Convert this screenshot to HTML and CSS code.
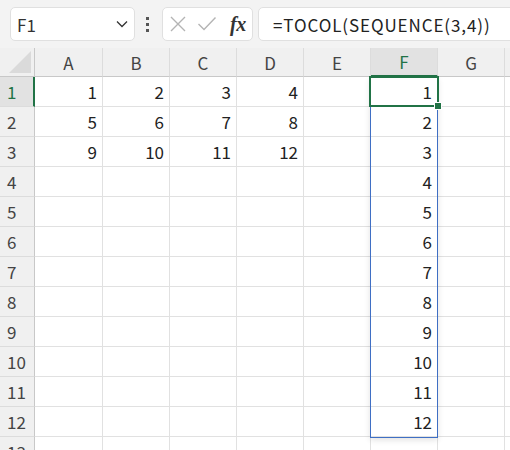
FILE: index.html
```html
<!DOCTYPE html>
<html>
<head>
<meta charset="utf-8">
<link rel="stylesheet" href="styles.css">
</head>
<body>
<div class="topbar">
  <div class="namebox"><span class="nm">F1</span>
    <svg class="chev" width="12" height="8" viewBox="0 0 12 8"><path d="M1 1.5 L6 6.5 L11 1.5" fill="none" stroke="#333" stroke-width="1.3"/></svg>
  </div>
  <div class="dots"><i></i><i></i><i></i></div>
  <div class="fxbox">
    <svg width="18" height="18" viewBox="0 0 18 18"><path d="M2 2 L16 16 M16 2 L2 16" stroke="#b4b4b4" stroke-width="1.4"/></svg>
    <svg width="20" height="18" viewBox="0 0 20 18"><path d="M1.5 9 L7 14.5 L18.5 2.5" fill="none" stroke="#b4b4b4" stroke-width="1.4"/></svg>
    <span class="fx">fx</span>
  </div>
  <div class="formula">=TOCOL(SEQUENCE(3,4))</div>
</div>
<div class="sheet">
  <div class="row hdr">
    <div class="rh corner"><span class="tri"></span></div>
    <div class="c ch">A</div><div class="c ch">B</div><div class="c ch">C</div><div class="c ch">D</div><div class="c ch">E</div><div class="c ch sel">F</div><div class="c ch">G</div><div class="c ch last"></div>
  </div>
  <div class="row"><div class="rh selr">1</div><div class="c">1</div><div class="c">2</div><div class="c">3</div><div class="c">4</div><div class="c"></div><div class="c">1</div><div class="c"></div><div class="c last"></div></div>
  <div class="row"><div class="rh">2</div><div class="c">5</div><div class="c">6</div><div class="c">7</div><div class="c">8</div><div class="c"></div><div class="c">2</div><div class="c"></div><div class="c last"></div></div>
  <div class="row"><div class="rh">3</div><div class="c">9</div><div class="c">10</div><div class="c">11</div><div class="c">12</div><div class="c"></div><div class="c">3</div><div class="c"></div><div class="c last"></div></div>
  <div class="row"><div class="rh">4</div><div class="c"></div><div class="c"></div><div class="c"></div><div class="c"></div><div class="c"></div><div class="c">4</div><div class="c"></div><div class="c last"></div></div>
  <div class="row"><div class="rh">5</div><div class="c"></div><div class="c"></div><div class="c"></div><div class="c"></div><div class="c"></div><div class="c">5</div><div class="c"></div><div class="c last"></div></div>
  <div class="row"><div class="rh">6</div><div class="c"></div><div class="c"></div><div class="c"></div><div class="c"></div><div class="c"></div><div class="c">6</div><div class="c"></div><div class="c last"></div></div>
  <div class="row"><div class="rh">7</div><div class="c"></div><div class="c"></div><div class="c"></div><div class="c"></div><div class="c"></div><div class="c">7</div><div class="c"></div><div class="c last"></div></div>
  <div class="row"><div class="rh">8</div><div class="c"></div><div class="c"></div><div class="c"></div><div class="c"></div><div class="c"></div><div class="c">8</div><div class="c"></div><div class="c last"></div></div>
  <div class="row"><div class="rh">9</div><div class="c"></div><div class="c"></div><div class="c"></div><div class="c"></div><div class="c"></div><div class="c">9</div><div class="c"></div><div class="c last"></div></div>
  <div class="row"><div class="rh">10</div><div class="c"></div><div class="c"></div><div class="c"></div><div class="c"></div><div class="c"></div><div class="c">10</div><div class="c"></div><div class="c last"></div></div>
  <div class="row"><div class="rh">11</div><div class="c"></div><div class="c"></div><div class="c"></div><div class="c"></div><div class="c"></div><div class="c">11</div><div class="c"></div><div class="c last"></div></div>
  <div class="row"><div class="rh">12</div><div class="c"></div><div class="c"></div><div class="c"></div><div class="c"></div><div class="c"></div><div class="c">12</div><div class="c"></div><div class="c last"></div></div>
  <div class="row"><div class="rh">13</div><div class="c"></div><div class="c"></div><div class="c"></div><div class="c"></div><div class="c"></div><div class="c"></div><div class="c"></div><div class="c last"></div></div>
  <div class="spill"></div>
  <div class="active"><span class="handle"></span></div>
</div>
</body>
</html>
```
FILE: styles.css
```css
html, body {
  margin: 0;
  padding: 0;
  background: #fff;
  overflow: hidden;
  font-family: "Noto Sans CJK JP", "Noto Sans", sans-serif;
  color: #222;
}
.topbar {
  height: 48px;
  background: #f3f3f3;
  display: flex;
  align-items: center;
  padding-left: 10px;
  box-sizing: border-box;
  white-space: nowrap;
  overflow: hidden;
}
.topbar > * { flex-shrink: 0; }
.namebox {
  width: 125px;
  height: 34px;
  box-sizing: border-box;
  background: #fff;
  border: 1px solid #e0e0e0;
  border-radius: 5px;
  display: flex;
  align-items: center;
  justify-content: space-between;
  padding: 0 4px 0 6px;
  font-size: 17px;
}
.nm { color: #333; }
.chev { margin-right: 2px; }
.dots {
  width: 4px;
  margin-left: 11px;
  display: flex;
  flex-direction: column;
  gap: 3px;
}
.dots i {
  display: block;
  width: 3px;
  height: 3px;
  background: #555;
}
.fxbox {
  margin-left: 12px;
  width: 91px;
  height: 34px;
  box-sizing: border-box;
  background: #fff;
  border: 1px solid #e0e0e0;
  border-radius: 5px;
  display: flex;
  align-items: center;
  padding-left: 6px;
  gap: 10px;
}
.fx {
  font-family: "Liberation Serif", serif;
  font-style: italic;
  font-weight: bold;
  font-size: 20px;
  color: #333;
  margin-left: 3px;
  letter-spacing: -0.5px;
}
.formula {
  margin-left: 5px;
  width: 300px;
  height: 34px;
  box-sizing: border-box;
  background: #fff;
  border: 1px solid #e0e0e0;
  border-radius: 5px;
  display: flex;
  align-items: center;
  padding-left: 14px;
  font-size: 17px;
  letter-spacing: 0.9px;
  color: #222;
}
.sheet {
  position: relative;
}
.row {
  display: flex;
  height: 30px;
}
.row.hdr { height: 29px; }
.rh {
  width: 35px;
  flex-shrink: 0;
  box-sizing: border-box;
  background: #f0f0f0;
  border-right: 1px solid #c8c8c8;
  border-bottom: 1px solid #dcdcdc;
  font-size: 17px;
  color: #444;
  display: flex;
  align-items: center;
  padding-left: 7px;
}
.rh.selr {
  background: #e2e2e2;
  color: #217346;
  border-right: 2px solid #217346;
}
.corner {
  position: relative;
  border-bottom: 1px solid #c8c8c8;
}
.tri {
  position: absolute;
  right: 3px;
  bottom: 3px;
  width: 0;
  height: 0;
  border-left: 22px solid transparent;
  border-bottom: 22px solid #dadada;
}
.c {
  width: 67px;
  flex-shrink: 0;
  box-sizing: border-box;
  border-right: 1px solid #e1e1e1;
  border-bottom: 1px solid #e1e1e1;
  display: flex;
  align-items: center;
  justify-content: flex-end;
  padding-right: 5px;
  font-size: 17px;
  color: #222;
}
.c:nth-child(2) { width: 68px; }
.c.last { width: 20px; }
.ch {
  background: #f0f0f0;
  justify-content: center;
  padding-right: 0;
  color: #444;
  border-right: 1px solid #dcdcdc;
  border-bottom: 1px solid #c8c8c8;
}
.ch.sel {
  background: #e2e2e2;
  color: #217346;
  border-bottom: 2px solid #217346;
}
.spill {
  position: absolute;
  left: 370px;
  top: 29px;
  width: 68px;
  height: 361px;
  box-sizing: border-box;
  border: 1px solid #3f6fc4;
  box-shadow: 0 2px 6px rgba(0,0,0,0.12);
}
.active {
  position: absolute;
  left: 369px;
  top: 28px;
  width: 70px;
  height: 31px;
  box-sizing: border-box;
  border: 2px solid #217346;
}
.handle {
  position: absolute;
  right: -5px;
  bottom: -5px;
  width: 6px;
  height: 6px;
  background: #217346;
  border: 1px solid #fff;
}
```
